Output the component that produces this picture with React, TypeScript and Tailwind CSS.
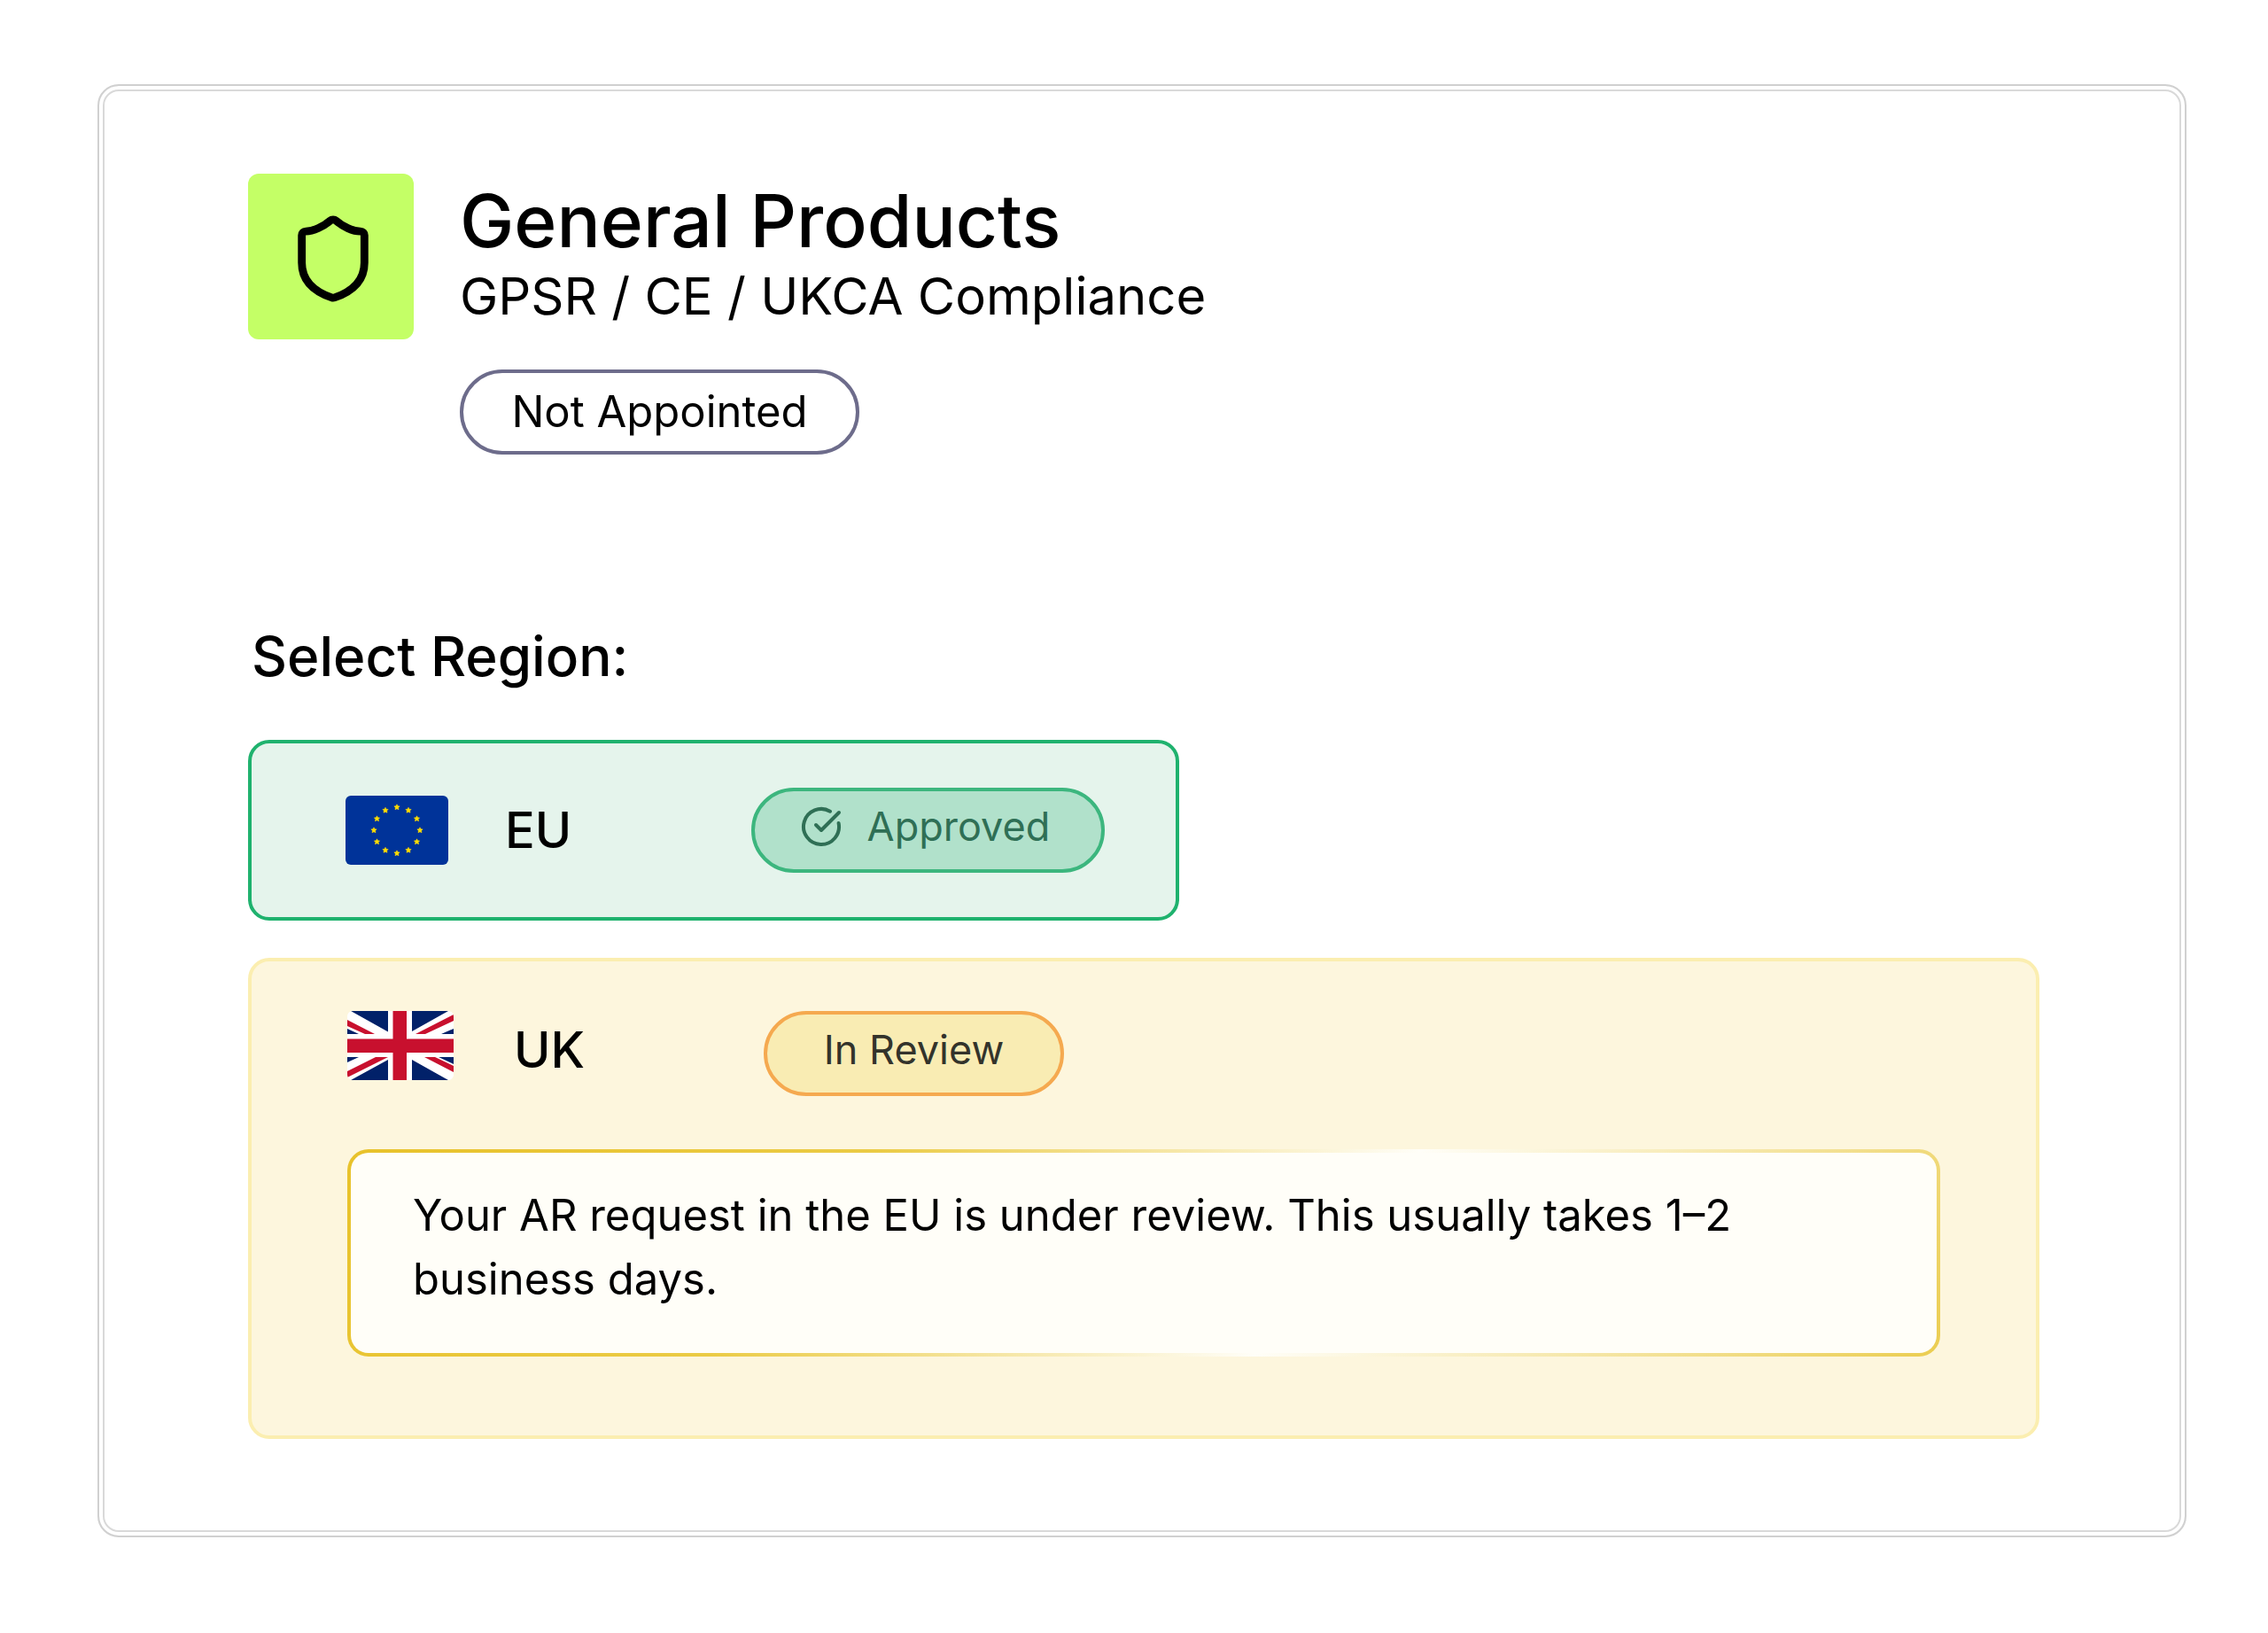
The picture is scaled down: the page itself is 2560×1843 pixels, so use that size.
import type { ReactNode } from "react";
import { CircleCheckBig, Shield } from "lucide-react";
import clsx from "clsx";

type BadgeTone = "neutral" | "approved" | "review";

const BADGE_TONES: Record<BadgeTone, string> = {
  neutral: "w-[451px] border-[#6d6c8b] text-[49px] text-black",
  approved: "w-[399px] border-[#3cb67e] bg-[#b1e1cb] pr-2 pb-2 text-[45px] text-[#2f6f55]",
  review: "w-[339px] border-[#f5a94f] bg-[#f9ecb3] pb-2 text-[45px] text-[#33332b]",
};

// Star centres for the EU flag, one per hour on the clock face
const STARS = Array.from({ length: 12 }, (_, i) => {
  const angle = (i * Math.PI) / 6;
  return { x: 58 + 26 * Math.sin(angle), y: 39 - 26 * Math.cos(angle) };
});

function Badge({ tone, children }: { tone: BadgeTone; children: ReactNode }) {
  return (
    <span
      className={clsx(
        "flex h-24 items-center justify-center gap-7 rounded-full border-4 whitespace-nowrap",
        BADGE_TONES[tone],
      )}
    >
      {children}
    </span>
  );
}

function EuFlag() {
  return (
    <svg viewBox="0 0 116 78" className="h-[78px] w-[116px] shrink-0 rounded-md" aria-hidden="true">
      <rect width="116" height="78" fill="#003399" />
      {STARS.map((s, i) => (
        <path
          key={i}
          transform={`translate(${s.x} ${s.y})`}
          d="M0-3.2 1-1.2 3.1-1.1 1.6.5 2 2.7 0 1.7-2 2.7-1.6.5-3.1-1.1-1-1.2Z"
          fill="#ffdd00"
          stroke="#ffdd00"
          strokeWidth="0.6"
        />
      ))}
    </svg>
  );
}

function UkFlag() {
  return (
    <svg viewBox="0 0 120 78" className="h-[78px] w-[120px] shrink-0 rounded-md" aria-hidden="true">
      <rect width="120" height="78" fill="#fff" />
      <path
        d="M4 0H46V23.5ZM73 0H114L73 23ZM0 20 13 26H0ZM120 20V26H106ZM0 52H13L0 58ZM103 52H120V60ZM4 78 46 55V78ZM73 55 114 78H73Z"
        fill="#012169"
      />
      <path
        d="M0 10 31 26H20L0 17ZM77 26 120 4V11L88 26ZM46 52H32L0 68V75ZM87 52H99L120 62V69Z"
        fill="#c8102e"
      />
      <path d="M51.5 0H67V78H51.5ZM0 31.5H120V47H0Z" fill="#c8102e" />
    </svg>
  );
}

export default function App() {
  return (
    <main className="min-h-screen bg-white pt-[95px] pr-[92px] pb-[108px] pl-[110px] font-['Inter',sans-serif] text-black">
      <section className="rounded-3xl border-2 border-[#d0d0d0] bg-white pt-[99px] pr-[164px] pb-[109px] pl-[168px] shadow-[inset_0_0_0_4px_#fff,inset_0_0_0_6px_#d9d9d9]">
        <header className="flex items-start gap-[52px]">
          <div className="flex size-[187px] shrink-0 items-center justify-center rounded-xl bg-[#c4ff66] pt-1 pl-1">
            <Shield size={106} strokeWidth={2} />
          </div>
          <div className="flex flex-col items-start pt-[10px]">
            <h1 className="text-[82px] leading-[88px] font-medium">General Products</h1>
            <p className="text-[58px] leading-[80px]">GPSR / CE / UKCA Compliance</p>
            <div className="mt-[43px]">
              <Badge tone="neutral">Not Appointed</Badge>
            </div>
          </div>
        </header>

        <h2 className="mt-[188px] pl-1 text-[62px] leading-[80px] font-medium">Select Region:</h2>

        <button
          type="button"
          className="mt-[54px] flex h-[204px] w-[52%] items-center justify-between rounded-3xl border-4 border-[#1fb26e] bg-[#e5f4ec] pr-20 pl-[106px]"
        >
          <span className="flex items-center gap-16">
            <EuFlag />
            <span className="text-[56px] font-medium">EU</span>
          </span>
          <Badge tone="approved">
            <CircleCheckBig size={48} strokeWidth={2} />
            Approved
          </Badge>
        </button>

        <div className="mt-[42px] rounded-3xl border-4 border-[#fbeeb0] bg-[#fdf6dd] px-[108px] pt-14 pb-[89px]">
          <button type="button" className="flex items-start">
            <UkFlag />
            <span className="w-[350px] pl-[68px] text-left text-[56px] leading-[88px] font-medium">UK</span>
            <Badge tone="review">In Review</Badge>
          </button>

          {/* Gradient outline: gold fading to white and back */}
          <div className="mt-[60px] rounded-3xl bg-[linear-gradient(129deg,#e8c22b_0%,#ebcb45_30%,#fffef8_61%,#ebcd50_100%)] p-1">
            <p className="rounded-[20px] bg-[#fffef8] px-[70px] pt-[35px] pb-[47px] text-[49px] leading-[72px]">
              Your AR request in the EU is under review. This usually takes 1–2 business days.
            </p>
          </div>
        </div>
      </section>
    </main>
  );
}
